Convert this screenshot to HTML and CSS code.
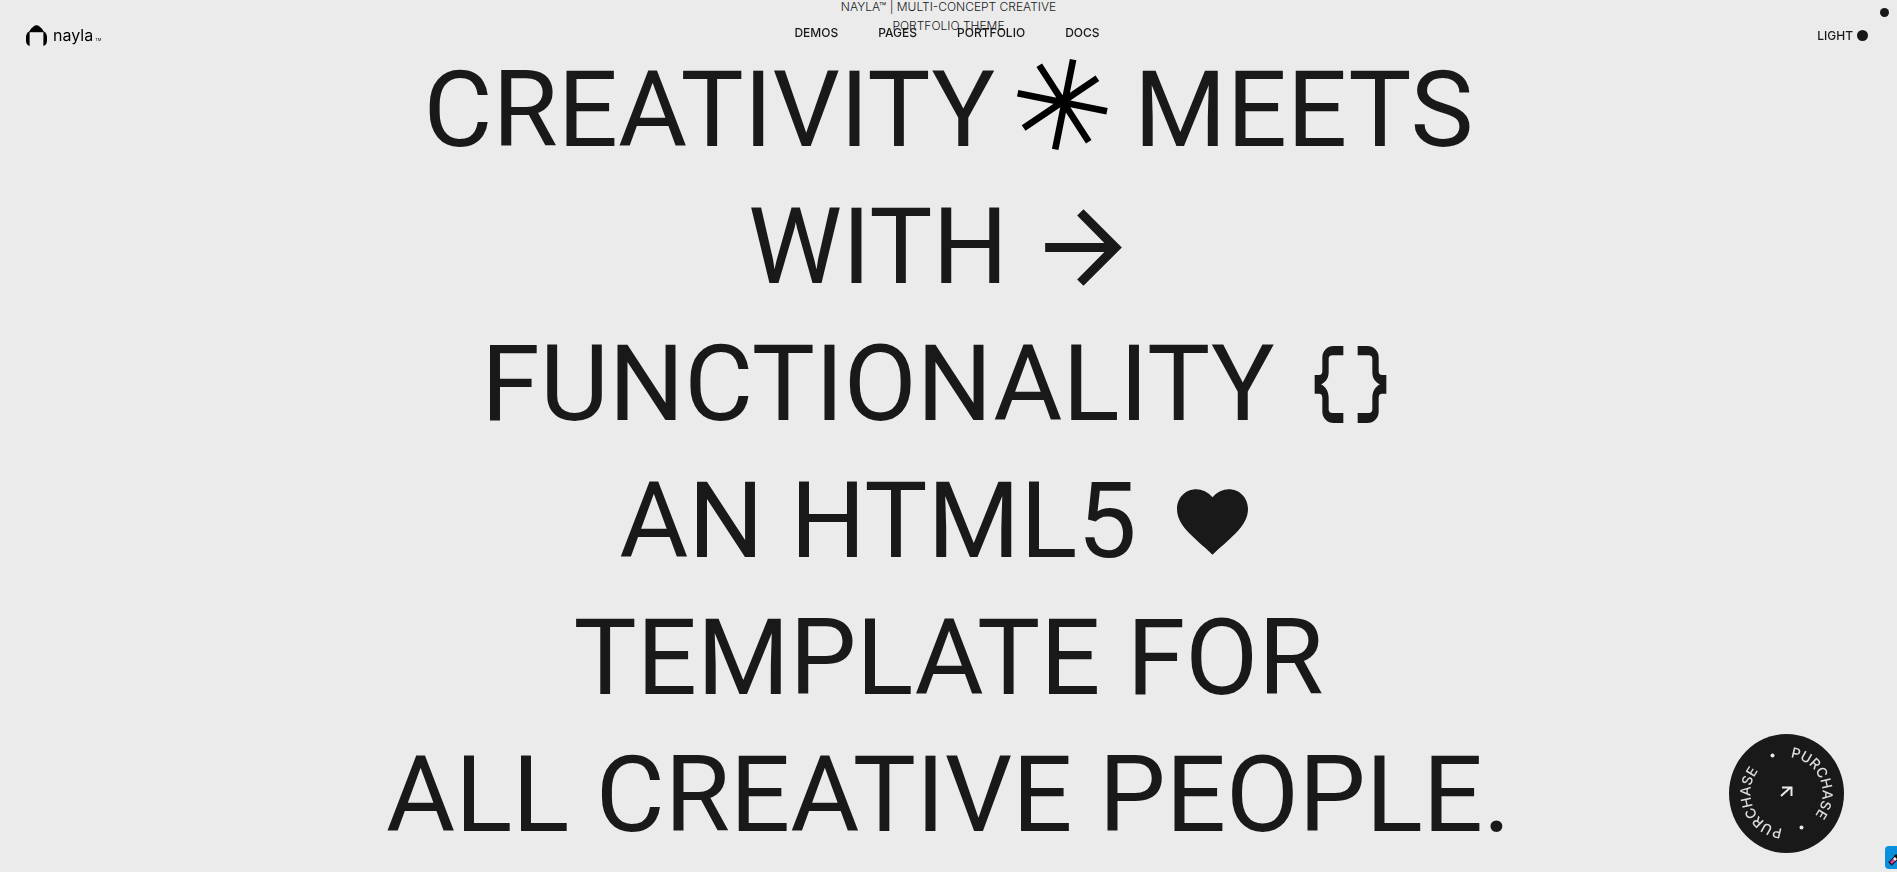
FILE: index.html
```html
<!DOCTYPE html>
<html lang="en">
<head>
<meta charset="utf-8">
<meta name="viewport" content="width=device-width, initial-scale=1">
<title>Nayla</title>
<link rel="stylesheet" href="styles.css">
</head>
<body>
<header class="header">
  <a class="logo" href="#">
    <svg class="logo-mark" viewBox="0 0 64 64" aria-hidden="true"><path d="M11 19 Q12 12 22 5 Q32-3 42 5 Q52 12 53 19Z"/><path d="M11 19V64Q0 60 0 48V36Q0 25 11 19Z"/><path d="M53 19V64Q64 60 64 48V36Q64 25 53 19Z"/><path d="M10 18H54V22H10Z"/></svg>
    <span class="logo-name">nayla</span><span class="logo-tm">TM</span>
  </a>
  <nav class="nav">
    <a href="#">DEMOS</a>
    <a href="#">PAGES</a>
    <a href="#">PORTFOLIO</a>
    <a href="#">DOCS</a>
  </nav>
  <button class="mode" type="button">LIGHT<span class="mode-dot"></span></button>
</header>

<main class="hero">
  <p class="subtitle">NAYLA™ | MULTI-CONCEPT CREATIVE<br>PORTFOLIO THEME</p>
  <h1 class="title">
    <span class="line">
      <span>CREATIVITY</span>
      <svg class="star" viewBox="102 54 274 274" aria-hidden="true"><path d="M271 56L217 326M104 157L373 211M169 73L318 303M344 112L122 262"/></svg>
      <span>MEETS</span>
    </span>
    <span class="line">
      <span>WITH</span>
      <svg class="icon" viewBox="0 0 24 24" aria-hidden="true"><path d="M12 4l-1.33 1.33L16.35 11.05H4v1.9h12.35l-5.68 5.72L12 20l8-8z"/></svg>
    </span>
    <span class="line">
      <span>FUNCTIONALITY</span>
      <svg class="icon" viewBox="19 21 345 345" aria-hidden="true">
        <path id="brace" d="M170 78H141A34 34 0 0 0 107 112V152Q107 165 97 165H84V221H97Q107 221 107 234V275A34 34 0 0 0 141 309H170V279H137Q126 279 126 268V235C126 215 118 201 103 193C118 185 126 175 126 155V117Q126 106 137 106H170Z"/>
        <use href="#brace" transform="translate(383) scale(-1 1)"/>
      </svg>
    </span>
    <span class="line">
      <span>AN HTML5</span>
      <svg class="icon" viewBox="9 12 345 345" aria-hidden="true"><path d="M181.500 112C168 96 150 88 133 88C100 88 75 114 75 147C75 172 88 195 112 220C131 240 158 262 181.500 284C205 262 232 240 251 220C275 195 288 172 288 147C288 114 263 88 230 88C213 88 195 96 181.500 112Z"/></svg>
    </span>
    <span class="line">TEMPLATE FOR</span>
    <span class="line">ALL CREATIVE PEOPLE.</span>
  </h1>
</main>

<a class="purchase" href="#" aria-label="Purchase">
  <svg viewBox="0 0 115 119" aria-hidden="true">
    <ellipse class="disc" cx="57.500" cy="59.500" rx="57.500" ry="59.500"/>
    <path id="ring" fill="none" d="M57.500 23A36 36 0 0 1 57.500 95A36 36 0 0 1 57.500 23"/>
    <text class="ring-text"><textPath href="#ring" startOffset="4">PURCHASE</textPath></text>
    <text class="ring-text"><textPath href="#ring" startOffset="117">PURCHASE</textPath></text>
    <circle class="light" cx="72.500" cy="93.500" r="2"/>
    <circle class="light" cx="43.500" cy="21.500" r="2"/>
    <path class="arrow" d="M52 62L62 53M53 53.500H62.500V62"/>
  </svg>
</a>
<span class="cursor"></span>
<button class="picker" type="button" aria-label="Color picker">
  <svg viewBox="0 0 24 24" aria-hidden="true"><path d="M5 18L12 11" stroke="#111" stroke-width="5"/><path d="M6 17L9 14" stroke="#e5399b" stroke-width="3"/><path d="M9 14L12 11" stroke="#fff" stroke-width="3"/><path d="M10 9l5 5M12 11l6-6" stroke="#111" stroke-width="3"/></svg>
</button>
</body>
</html>
```
FILE: styles.css
```css
* { box-sizing: border-box; }

body {
  margin: 0;
  min-height: 100vh;
  overflow: hidden;
  background: #ebebeb;
  color: #191919;
  font-family: Inter, "Liberation Sans", sans-serif;
}

a { color: inherit; text-decoration: none; }

button {
  border: 0;
  padding: 0;
  background: none;
  color: inherit;
  font: inherit;
}

.header {
  position: absolute;
  top: 0;
  left: 0;
  right: 0;
  z-index: 2;
  display: grid;
  grid-template-columns: 1fr auto 1fr;
  padding: 24px 29px 0 26px;
}

.logo {
  display: flex;
  align-items: center;
  height: 22px;
  color: #000;
}

.logo-mark { width: 21px; height: 21px; }

.logo-name {
  margin-left: 6px;
  font-size: 16px;
  line-height: 20px;
}

.logo-tm {
  align-self: flex-end;
  margin-left: 2px;
  font-size: 4px;
  line-height: 12px;
}

.nav {
  display: flex;
  gap: 40px;
  font-size: 12px;
  font-weight: 500;
  line-height: 17px;
}

.mode {
  justify-self: end;
  display: flex;
  align-items: center;
  gap: 4px;
  height: 22px;
  font-size: 12px;
  font-weight: 500;
}

.mode-dot {
  width: 11px;
  height: 11px;
  border-radius: 50%;
  background: #191919;
}

.hero {
  margin-top: -3px;
  text-align: center;
}

.subtitle {
  margin: 0 0 7px;
  font-size: 12px;
  font-weight: 300;
  line-height: 19px;
}

.title {
  margin: 0;
  font: 400 106px/137px Roboto, "Open Sans", sans-serif;
}

.line {
  display: flex;
  justify-content: center;
  align-items: center;
  gap: 18px;
  height: 137px;
  white-space: nowrap;
}

.icon {
  width: 115px;
  height: 115px;
  margin-right: 8px;
  fill: #191919;
}

.star {
  width: 91px;
  height: 91px;
  margin: 0 8px 12px 4px;
  fill: none;
  stroke: #000;
  stroke-width: 20;
}

.purchase {
  position: fixed;
  right: 53px;
  bottom: 19px;
  width: 115px;
  height: 119px;
}

.purchase svg { display: block; }
.disc { fill: #191919; }
.light { fill: #ebebeb; }

.ring-text {
  fill: #dedede;
  font-size: 14px;
  font-weight: 500;
}

.arrow {
  fill: none;
  stroke: #ebebeb;
  stroke-width: 2;
}

.cursor {
  position: fixed;
  top: 8px;
  right: 8px;
  width: 9px;
  height: 9px;
  border-radius: 50%;
  background: #191919;
}

.picker {
  position: fixed;
  right: -12px;
  bottom: 3px;
  width: 24px;
  height: 23px;
  border-radius: 4px;
  background: #0a8fdc;
}

.picker svg { display: block; width: 24px; height: 24px; }
```
